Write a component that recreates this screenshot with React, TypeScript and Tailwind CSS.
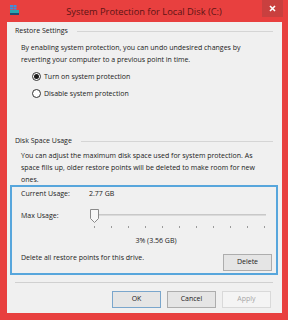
import React from "react";

const font = { fontFamily: '"Open Sans", "Noto Sans", sans-serif' };

function Radio({ checked, label }: { checked?: boolean; label: string }) {
  return (
    <div className="flex items-center h-[13px] pl-[25px]">
      <div className="w-[9px] h-[9px] rounded-full border border-[#333333] bg-white flex items-center justify-center">
        {checked && <div className="w-[5px] h-[5px] rounded-full bg-[#1a1a1a]" />}
      </div>
      <span className="ml-[3px] text-[7px] leading-[12px] text-[#1a1a1a]">{label}</span>
    </div>
  );
}

function GroupHeader({ label }: { label: string }) {
  return (
    <div className="flex items-center h-[12px] pl-[8px] pr-[9px]">
      <span className="text-[7px] leading-[12px] text-[#1a1a1a] whitespace-nowrap">{label}</span>
      <div className="flex-1 h-px bg-[#d5d5d5] ml-[9px]" />
    </div>
  );
}

function Btn({ label, disabled, def }: { label: string; disabled?: boolean; def?: boolean }) {
  return (
    <div
      className={
        "w-[49px] h-[17px] flex items-center justify-center text-[7px] border " +
        (disabled
          ? "bg-[#f4f4f4] border-[#d9d9d9] text-[#a6a6a6]"
          : def
          ? "bg-[#e5e5e5] border-[#7aa6cc] text-[#1a1a1a]"
          : "bg-[#e5e5e5] border-[#adadad] text-[#1a1a1a]")
      }
    >
      {label}
    </div>
  );
}

export default function App() {
  const ticks = Array.from({ length: 11 }, (_, i) => i);
  return (
    <div className="w-[288px] h-[320px] bg-[#e8403f] flex flex-col overflow-hidden" style={font}>
      <div className="relative h-[22px] shrink-0 flex items-center justify-center">
        <svg className="absolute left-[10px] top-[5px]" width="9" height="11" viewBox="0 0 9 11">
          <rect x="0" y="0" width="3" height="2" fill="#3d8fe0" />
          <rect x="3.5" y="0" width="3" height="2" fill="#3d8fe0" />
          <rect x="0" y="2.5" width="3" height="2" fill="#3d8fe0" />
          <rect x="3.5" y="2.5" width="3" height="2" fill="#3d8fe0" />
          <rect x="0" y="5" width="9" height="3" fill="#2aa8b0" />
          <rect x="0" y="8" width="9" height="2" fill="#1e4f74" />
        </svg>
        <span className="text-[9.3px] text-[#5c1414] mt-[2px] whitespace-nowrap">
          System Protection for Local Disk (C:)
        </span>
        <div className="absolute right-[5px] top-0 w-[21px] h-[17px] bg-[#c9403f] flex items-center justify-center">
          <svg width="7" height="7" viewBox="0 0 7 7">
            <path d="M1 1 L6 6 M6 1 L1 6" stroke="#ffffff" strokeWidth="1.6" />
          </svg>
        </div>
      </div>
      <div className="ml-[7px] mr-[6px] mb-[7px] flex-1 bg-[#f0f0f0] flex flex-col pt-[3px]">
        <GroupHeader label="Restore Settings" />
        <div className="mt-[5px] pl-[14px] text-[7px] leading-[12px] text-[#1a1a1a] whitespace-nowrap">
          By enabling system protection, you can undo undesired changes by
          <br />
          reverting your computer to a previous point in time.
        </div>
        <div className="mt-[4px]">
          <Radio checked label="Turn on system protection" />
        </div>
        <div className="mt-[4px]">
          <Radio label="Disable system protection" />
        </div>
        <div className="mt-[35px]">
          <GroupHeader label="Disk Space Usage" />
        </div>
        <div className="mt-[3px] pl-[14px] text-[7px] leading-[12px] text-[#1a1a1a] whitespace-nowrap">
          You can adjust the maximum disk space used for system protection. As
          <br />
          space fills up, older restore points will be deleted to make room for new
          <br />
          ones.
        </div>
        <div className="-mt-px ml-[3px] w-[268px] h-[90px] shrink-0 border-2 border-[#57a6dc] flex flex-col pt-[1px]">
          <div className="flex items-center h-[12px] pl-[9px] text-[7px] text-[#1a1a1a]">
            <span className="w-[68px]">Current Usage:</span>
            <span>2.77 GB</span>
          </div>
          <div className="flex mt-[9px] pl-[9px] h-[22px]">
            <span className="w-[69px] text-[7px] leading-[12px] mt-[1px] text-[#1a1a1a]">Max Usage:</span>
            <div className="relative w-[176px] h-[22px]">
              <div className="absolute left-[4px] right-0 top-[5px] h-[2px] bg-[#dadada] border-t border-[#c8c8c8]" />
              <svg className="absolute left-0 top-0" width="9" height="14" viewBox="0 0 9 14">
                <path d="M0.5 0.5 H8.5 V9.5 L4.5 13.5 L0.5 9.5 Z" fill="#f7f7f7" stroke="#8a8a8a" />
              </svg>
              {ticks.map((t) => (
                <div key={t} className="absolute top-[17px] w-px h-[2px] bg-[#9a9a9a]" style={{ left: 4 + t * 17 }} />
              ))}
            </div>
          </div>
          <div className="mt-[4px] text-center text-[7px] leading-[12px] text-[#1a1a1a] pl-[24px]">3% (3.56 GB)</div>
          <div className="flex items-end justify-between pl-[9px] pr-[4px] mt-[5px]">
            <span className="text-[7px] leading-[12px] text-[#1a1a1a] mb-[7px]">Delete all restore points for this drive.</span>
            <Btn label="Delete" />
          </div>
        </div>
        <div className="mt-[7px] ml-[8px] mr-[9px] h-px bg-[#d0d0d0]" />
        <div className="flex justify-end gap-[6px] pr-[11px] mt-[8px]">
          <Btn label="OK" def />
          <Btn label="Cancel" />
          <Btn label="Apply" disabled />
        </div>
      </div>
    </div>
  );
}
